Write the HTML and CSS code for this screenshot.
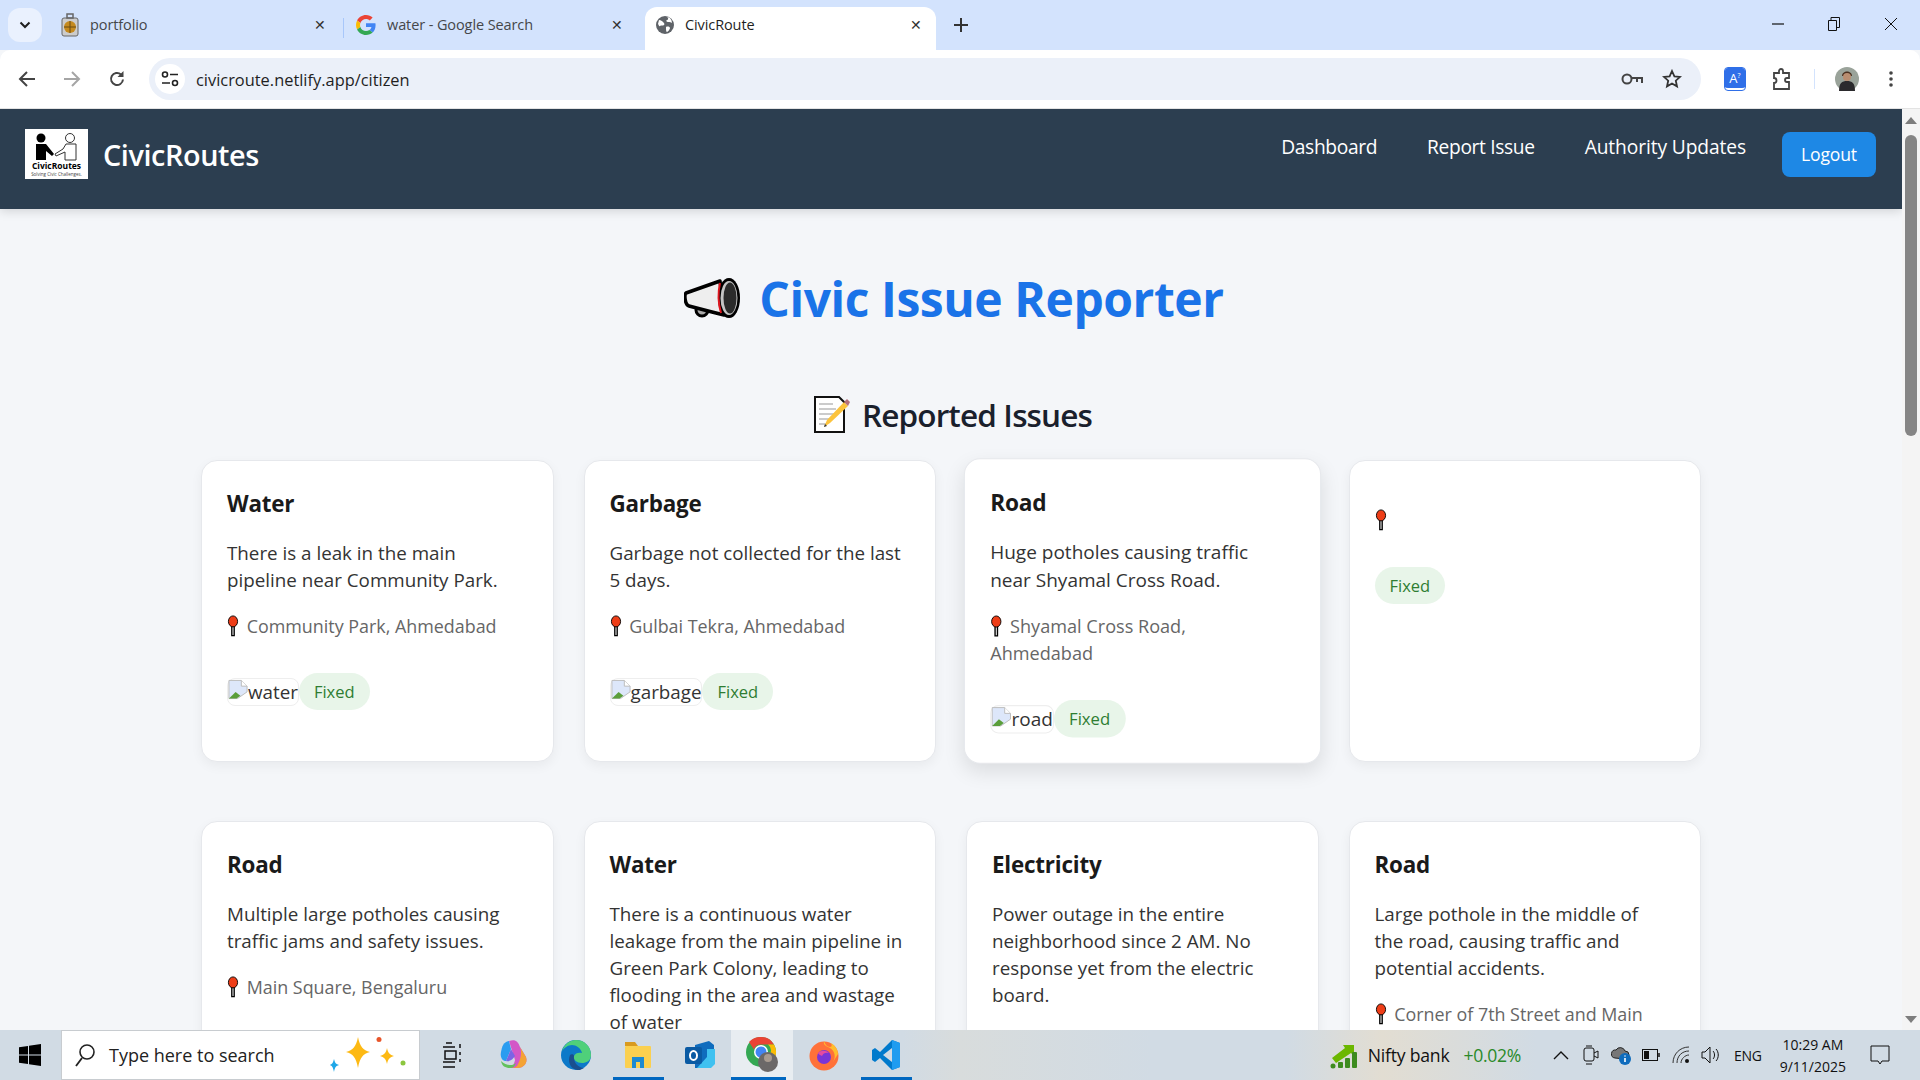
FILE: index.html
```html
<!DOCTYPE html>
<html lang="en">
<head>
<meta charset="UTF-8" />
<title>CivicRoute</title>
<link rel="stylesheet" href="styles.css">
</head>
<body>
  <div class="tabstrip">
    <div class="tab-menu">
      <svg width="12" height="8" viewBox="0 0 12 8"><path d="M1.5 1.5 6 6l4.5-4.5" fill="none" stroke="#1f1f1f" stroke-width="2"/></svg>
    </div>
    <div class="tab tab-first">
      <svg class="favicon" width="20" height="24" viewBox="0 0 20 24"><rect x="2" y="5" width="16" height="18" rx="2" fill="#ccc" stroke="#666"/><rect x="7" y="1" width="6" height="4" fill="none" stroke="#666" stroke-width="1.5"/><circle cx="10" cy="14" r="6" fill="#c58a1e"/><path d="M4 14h12M10 8v12" stroke="#6b4a10"/></svg>
      <span class="tab-title">portfolio</span>
      <span class="tab-close">✕</span>
    </div>
    <div class="tab-sep"></div>
    <div class="tab tab-second">
      <svg class="favicon" width="20" height="20" viewBox="0 0 48 48"><path fill="#ea4335" d="M24 9.5c3.5 0 6.700 1.300 9.100 3.500l6.800-6.800C35.800 2.400 30.300 0 24 0 14.600 0 6.600 5.400 2.600 13.200l7.900 6.100C12.400 13.600 17.700 9.500 24 9.500z"/><path fill="#4285f4" d="M47 24.500c0-1.600-.1-3.100-.4-4.500H24v9h13c-.6 3-2.200 5.500-4.800 7.200l7.700 6C44.300 38 47 31.800 47 24.500z"/><path fill="#fbbc05" d="M10.500 28.700c-.5-1.400-.8-3-.8-4.700s.3-3.200.8-4.700l-7.900-6.100C.9 16.500 0 20.100 0 24s.9 7.500 2.600 10.800z"/><path fill="#34a853" d="M24 48c6.500 0 11.900-2.100 15.900-5.800l-7.700-6c-2.200 1.400-4.900 2.300-8.200 2.300-6.300 0-11.600-4.100-13.500-9.800l-7.900 6.100C6.600 42.600 14.600 48 24 48z"/></svg>
      <span class="tab-title">water - Google Search</span>
      <span class="tab-close">✕</span>
    </div>
    <div class="tab tab-active">
      <svg class="favicon" width="20" height="20" viewBox="0 0 20 20"><circle cx="10" cy="10" r="9" fill="#5f6368"/><path d="M4 5c2 0 3 1 4 2s2 2 1 3-3 0-4 1-1-1-2-2zM12 2c2 1 1 3 0 3s-1 2 1 2 3 0 4 1c0-3-2-6-5-6zM11 12c2-1 4 0 4 1s-2 4-3 4-1-3-1-5z" fill="#fff"/></svg>
      <span class="tab-title tab-title-active">CivicRoute</span>
      <span class="tab-close">✕</span>
    </div>
    <svg class="tab-new" width="14" height="14" viewBox="0 0 14 14"><path d="M7 0v14M0 7h14" stroke="#333" stroke-width="2"/></svg>
    <div class="window-controls">
      <svg width="12" height="12" viewBox="0 0 12 12"><path d="M0 6h12" stroke="#111" stroke-width="1.2"/></svg>
      <svg width="12" height="14" viewBox="0 0 12 14"><path d="M.5 3.500h8v10h-8zM3 3.500V.5h8.500v10H8.500" fill="none" stroke="#111"/></svg>
      <svg width="14" height="14" viewBox="0 0 14 14"><path d="M1 1l12 12M13 1 1 13" stroke="#111"/></svg>
    </div>
  </div>

  <div class="toolbar">
    <svg class="tool-icon" width="18" height="16" viewBox="0 0 18 16"><path d="M9 1 2 8l7 7M2 8h15" fill="none" stroke="#444" stroke-width="2"/></svg>
    <svg class="tool-icon" width="18" height="16" viewBox="0 0 18 16"><path d="m9 1 7 7-7 7M16 8H1" fill="none" stroke="#a5a5a5" stroke-width="2"/></svg>
    <svg class="tool-icon" width="18" height="18" viewBox="0 0 18 18"><path d="M15 9.500A6 6 0 1 1 13 4.500" fill="none" stroke="#444" stroke-width="2"/><path d="M15.500 1v6h-6z" fill="#444"/></svg>
    <div class="omnibox">
      <div class="site-info">
        <svg width="18" height="18" viewBox="0 0 18 18"><circle cx="4" cy="4.500" r="2.500" fill="none" stroke="#222" stroke-width="1.600"/><path d="M9 4.500h8M1 13h8" stroke="#222" stroke-width="1.600"/><circle cx="14" cy="13" r="2.500" fill="none" stroke="#222" stroke-width="1.600"/></svg>
      </div>
      <span class="url">civicroute.netlify.app/citizen</span>
      <div class="omni-actions">
        <svg width="22" height="14" viewBox="0 0 22 14"><circle cx="6" cy="7" r="4.500" fill="none" stroke="#444" stroke-width="2"/><path d="M10 6h11v5M16 6v4" fill="none" stroke="#444" stroke-width="2"/></svg>
        <svg width="20" height="20" viewBox="0 0 20 20"><path d="m10 2 2.400 5.300 5.600.6-4.200 3.800 1.200 5.700-5-2.900-5 2.900 1.200-5.700L2 7.900l5.600-.6z" fill="none" stroke="#333" stroke-width="1.800"/></svg>
      </div>
    </div>
    <div class="tool-ext">
      <div class="ext-a">A<sup>?</sup></div>
      <svg class="ext-puzzle" width="20" height="22" viewBox="0 0 20 22"><path d="M2 5h5V3a2 2 0 0 1 4 0v2h6v5h-2a2 2 0 0 0 0 4h2v7H2v-6a2.500 2.500 0 0 0 0-5z" fill="none" stroke="#444" stroke-width="1.800"/></svg>
      <div class="tool-sep"></div>
      <svg class="avatar" width="24" height="24" viewBox="0 0 24 24"><circle cx="12" cy="12" r="12" fill="#9aa39a"/><path d="M7 9c0-6 10-6 10 0z" fill="#4a3020"/><circle cx="12" cy="10" r="4" fill="#b98d70"/><path d="M4 24c0-8 3-10 8-10s8 2 8 10z" fill="#2b2a2d"/></svg>
      <svg class="tool-more" width="4" height="16" viewBox="0 0 4 16"><circle cx="2" cy="2" r="1.800" fill="#444"/><circle cx="2" cy="8" r="1.800" fill="#444"/><circle cx="2" cy="14" r="1.800" fill="#444"/></svg>
    </div>
  </div>

  <div class="viewport">
    <div class="page">
      <nav class="navbar">
        <div class="brand">
          <svg class="logo" width="63" height="50" viewBox="0 0 63 50">
            <rect width="63" height="50" fill="#fff"/>
            <circle cx="16" cy="9" r="4.500" fill="#000"/>
            <path d="M11 15h10l8 10-2 2-6-5v9H11z" fill="#000"/>
            <circle cx="45" cy="9" r="4.500" fill="#fff" stroke="#333"/>
            <path d="M41 15h10v16H40v-8l-9 4-1-2 8-5z" fill="#fff" stroke="#333"/>
            <text x="31.500" y="40" class="logo-name">CivicRoutes</text>
            <text x="31.500" y="47" class="logo-tag">Solving Civic Challenges.</text>
          </svg>
          <span class="brand-name">CivicRoutes</span>
        </div>
        <div class="nav-links">
          <a>Dashboard</a>
          <a>Report Issue</a>
          <a>Authority Updates</a>
        </div>
        <button class="logout">Logout</button>
      </nav>

      <main class="content">
        <h1 class="page-title">
          <svg width="56" height="40" viewBox="0 0 56 40">
            <circle cx="18" cy="32" r="6" fill="#aaa" stroke="#000" stroke-width="3"/>
            <path d="M2 15 36 3l4 34-12-3L5 28C1 27 0 17 2 15z" fill="#eee" stroke="#000" stroke-width="3.500" stroke-linejoin="round"/>
            <ellipse cx="45" cy="20" rx="11" ry="20" fill="#000"/>
            <ellipse cx="45" cy="20" rx="8.500" ry="17" fill="#c4c4c4"/>
            <ellipse cx="46" cy="20" rx="6.500" ry="15.500" fill="#2b2b2b"/>
            <path d="M36 5c-2 9-2 20 1 30" fill="none" stroke="#e0161e" stroke-width="2"/>
          </svg>
          <span>Civic Issue Reporter</span>
        </h1>
        <h2 class="section-title">
          <svg width="36" height="37" viewBox="0 0 36 37">
            <path d="M1 1h24l5 5v30H1z" fill="#fff" stroke="#111" stroke-width="2"/>
            <path d="M5 8h14M5 13h17M5 18h17M5 23h12M5 28h8" stroke="#bbb" stroke-width="1.500"/>
            <path d="m10 31 3-7L30 6l4 4-18 17z" fill="#fcc33c"/>
            <path d="m30 6 3-3 3 3-2 4z" fill="#b5707a"/>
            <path d="m10 31 1-3 2 2z" fill="#333"/>
          </svg>
          <span>Reported Issues</span>
        </h2>

        <div class="issue-grid">
          <article class="card">
            <h3>Water</h3>
            <p class="desc">There is a leak in the main<br>pipeline near Community Park.</p>
            <p class="loc"><svg class="pin" viewBox="0 0 12 24"><path d="M4.700 12h2.600v10.500H4.700z" fill="#fff" stroke="#000" stroke-width="1.500"/><ellipse cx="6" cy="7" rx="5" ry="6" fill="#ee3d17" stroke="#000"/></svg> Community Park, Ahmedabad</p>
            <div class="card-foot">
              <span class="img-alt"><svg class="broken" viewBox="0 0 21 21"><path d="M1 1h13l6 6v6L10 20H1z" fill="#dde7fa" stroke="#bbb"/><path d="M14 1v6h6" fill="#fff" stroke="#bbb"/><path d="M1 20l7-7 5 4-4 3z" fill="#5a9e3a"/></svg>water</span>
              <span class="status">Fixed</span>
            </div>
          </article>
          <article class="card">
            <h3>Garbage</h3>
            <p class="desc">Garbage not collected for the last<br>5 days.</p>
            <p class="loc"><svg class="pin" viewBox="0 0 12 24"><path d="M4.700 12h2.600v10.500H4.700z" fill="#fff" stroke="#000" stroke-width="1.500"/><ellipse cx="6" cy="7" rx="5" ry="6" fill="#ee3d17" stroke="#000"/></svg> Gulbai Tekra, Ahmedabad</p>
            <div class="card-foot">
              <span class="img-alt"><svg class="broken" viewBox="0 0 21 21"><path d="M1 1h13l6 6v6L10 20H1z" fill="#dde7fa" stroke="#bbb"/><path d="M14 1v6h6" fill="#fff" stroke="#bbb"/><path d="M1 20l7-7 5 4-4 3z" fill="#5a9e3a"/></svg>garbage</span>
              <span class="status">Fixed</span>
            </div>
          </article>
          <article class="card card-hover">
            <h3>Road</h3>
            <p class="desc">Huge potholes causing traffic<br>near Shyamal Cross Road.</p>
            <p class="loc"><svg class="pin" viewBox="0 0 12 24"><path d="M4.700 12h2.600v10.500H4.700z" fill="#fff" stroke="#000" stroke-width="1.500"/><ellipse cx="6" cy="7" rx="5" ry="6" fill="#ee3d17" stroke="#000"/></svg> Shyamal Cross Road,<br>Ahmedabad</p>
            <div class="card-foot">
              <span class="img-alt"><svg class="broken" viewBox="0 0 21 21"><path d="M1 1h13l6 6v6L10 20H1z" fill="#dde7fa" stroke="#bbb"/><path d="M14 1v6h6" fill="#fff" stroke="#bbb"/><path d="M1 20l7-7 5 4-4 3z" fill="#5a9e3a"/></svg>road</span>
              <span class="status">Fixed</span>
            </div>
          </article>
          <article class="card">
            <h3></h3>
            <p class="loc"><svg class="pin" viewBox="0 0 12 24"><path d="M4.700 12h2.600v10.500H4.700z" fill="#fff" stroke="#000" stroke-width="1.500"/><ellipse cx="6" cy="7" rx="5" ry="6" fill="#ee3d17" stroke="#000"/></svg></p>
            <div class="card-foot">
              <span class="status">Fixed</span>
            </div>
          </article>

          <article class="card">
            <h3>Road</h3>
            <p class="desc">Multiple large potholes causing<br>traffic jams and safety issues.</p>
            <p class="loc"><svg class="pin" viewBox="0 0 12 24"><path d="M4.700 12h2.600v10.500H4.700z" fill="#fff" stroke="#000" stroke-width="1.500"/><ellipse cx="6" cy="7" rx="5" ry="6" fill="#ee3d17" stroke="#000"/></svg> Main Square, Bengaluru</p>
          </article>
          <article class="card">
            <h3>Water</h3>
            <p class="desc">There is a continuous water<br>leakage from the main pipeline in<br>Green Park Colony, leading to<br>flooding in the area and wastage<br>of water</p>
          </article>
          <article class="card">
            <h3>Electricity</h3>
            <p class="desc">Power outage in the entire<br>neighborhood since 2 AM. No<br>response yet from the electric<br>board.</p>
          </article>
          <article class="card">
            <h3>Road</h3>
            <p class="desc">Large pothole in the middle of<br>the road, causing traffic and<br>potential accidents.</p>
            <p class="loc"><svg class="pin" viewBox="0 0 12 24"><path d="M4.700 12h2.600v10.500H4.700z" fill="#fff" stroke="#000" stroke-width="1.500"/><ellipse cx="6" cy="7" rx="5" ry="6" fill="#ee3d17" stroke="#000"/></svg> Corner of 7th Street and Main</p>
          </article>
        </div>
      </main>
    </div>
    <div class="scrollbar">
      <div class="arrow-up"></div>
      <div class="thumb"></div>
      <div class="arrow-down"></div>
    </div>
  </div>

  <footer class="taskbar">
    <svg class="start" width="22" height="22" viewBox="0 0 22 22"><path d="M0 3.200 9 2v8.500H0zM10 1.800 22 0v10.500H10zM0 11.500h9V20L0 18.800zM10 11.500h12V22l-12-1.800z" fill="#000"/></svg>
    <div class="search">
      <svg width="22" height="26" viewBox="0 0 22 26"><circle cx="13" cy="10" r="7" fill="none" stroke="#222" stroke-width="1.600"/><path d="M8 16 2 24" stroke="#222" stroke-width="1.800"/></svg>
      <span>Type here to search</span>
      <svg class="sparkles" width="76" height="36" viewBox="0 0 76 36">
        <path d="M28 0c2 10 5 13 12 15-7 2-10 5-12 16-2-11-5-14-12-16 7-2 10-5 12-15z" fill="#fdb913"/>
        <path d="M57 11c1 5 3 7 7 8-4 1-6 3-7 8-1-5-3-7-7-8 4-1 6-3 7-8z" fill="#fdb913"/>
        <path d="M4 22c1 4 2 5 5 6-3 1-4 2-5 7-1-5-2-6-4-7 2-1 3-2 4-6z" fill="#1ea7e8"/>
        <circle cx="49" cy="2.500" r="2.500" fill="#e8552a"/><circle cx="73" cy="26" r="2.500" fill="#8cc63f"/>
      </svg>
    </div>
    <div class="task-icons">
      <div class="task-icon">
        <svg width="20" height="26" viewBox="0 0 20 26"><path d="M1 5h12M1 20h12M1 25h12M4 1h6M3 9h11v8H3zM18 2v4M18 10v3M18 17v3" fill="none" stroke="#111" stroke-width="1.500"/></svg>
      </div>
      <div class="task-icon">
        <svg width="32" height="32" viewBox="0 0 32 32"><path d="M11 2c6-2 9 0 11 6l6 10c2 6-2 11-9 11H10c4 0 6-3 7-8L11 2z" fill="#d357c7"/><path d="M11 2C5 3 4 8 3 13c-1 5 1 9 5 9l5-12z" fill="#2b9cf0"/><path d="M22 8c2 4 1 12-2 17-1 3-4 4-8 4h7c7 0 11-5 9-11z" fill="#f4a334"/><path d="M8 22c4 1 7-2 9-5l-4-7-5 12z" fill="#7c64e5"/><path d="M3 22c1 5 4 7 9 7 3 0 5-2 6-5-3 3-10 3-15-2z" fill="#63c15c"/></svg>
      </div>
      <div class="task-icon">
        <svg width="30" height="30" viewBox="0 0 30 30"><circle cx="15" cy="15" r="15" fill="#0c79c9"/><path d="M15 0c8 0 15 6 15 15 0 6-5 8-9 8-5 0-9-3-8-7 1-3 5-4 8-3-1-5-6-8-10-8-4 0-8 3-10 6C3 5 8 0 15 0z" fill="#4fd07a"/><path d="M13 16c-1 6 4 12 10 12l-4 2C10 31 6 22 9 15c1-1 4-1 4 1z" fill="#1a4f8f"/></svg>
      </div>
      <div class="task-icon task-open">
        <svg width="28" height="28" viewBox="0 0 28 28"><path d="M1 1h10l3 4H1z" fill="#d99a1e"/><rect x="1" y="5" width="26" height="22" rx="1" fill="#fbd04f"/><path d="M8 27V16h12v11h-4v-6h-4v6z" fill="#1d8ad1"/></svg>
      </div>
      <div class="task-icon">
        <svg width="30" height="30" viewBox="0 0 30 30"><path d="M10 5 24 1l5 4v17l-5 6H10z" fill="#0f6cbd"/><path d="M22 9h8v15l-4 4H12l10-11z" fill="#3fc1f0"/><rect y="7" width="17" height="17" rx="2" fill="#0a5aa3"/><ellipse cx="8.500" cy="15.500" rx="3.500" ry="4.500" fill="none" stroke="#fff" stroke-width="2"/></svg>
      </div>
      <div class="task-icon task-active">
        <svg width="32" height="36" viewBox="0 0 32 36"><circle cx="15" cy="15" r="15" fill="#34a853"/><path d="M15 0a15 15 0 0 1 13 7.500H15a7 7 0 0 0-7 5L3 5a15 15 0 0 1 12-5z" fill="#ea4335"/><path d="M28 7.500A15 15 0 0 1 17 30l6-11a8 8 0 0 0-1-11.500z" fill="#fbbc05"/><circle cx="15" cy="15" r="7" fill="#fff"/><circle cx="15" cy="15" r="5.500" fill="#4285f4"/><circle cx="22" cy="25" r="10" fill="#6b6868"/><circle cx="22" cy="21" r="4" fill="#a89b90"/></svg>
      </div>
      <div class="task-icon">
        <svg width="30" height="32" viewBox="0 0 30 32"><circle cx="15" cy="17" r="14.500" fill="#ff7139"/><path d="M15 2c-1 4 2 5 6 7 5 3 6 9 3 14L29 15c0-4-3-9-7-11 1 2 1 4-1 4-3 0-5-3-6-6z" fill="#ffbd2e"/><circle cx="15" cy="18" r="7" fill="#7a35d6"/><path d="M9 14c3-3 8-3 11 0-3-1-6 0-7 3-1-1-3-1-4-3z" fill="#e64ba0"/></svg>
      </div>
      <div class="task-icon task-open">
        <svg width="28" height="30" viewBox="0 0 28 30"><path d="M20 0 8 12 3 8 0 10v10l3 2 5-4 12 12 8-3V3z" fill="#007acc"/><path d="M20 8v14l-9-7z" fill="#d1dbe4"/><path d="M20 0l8 3v24l-8 3z" fill="#1f9cf0"/></svg>
      </div>
    </div>
    <div class="tray">
      <svg width="28" height="28" viewBox="0 0 28 28"><path d="M2 17 15 7l-2-3h11v11l-3-3L6 22z" fill="#6bb700"/><circle cx="3" cy="25" r="2.500" fill="#3d8b1f"/><rect x="8" y="21" width="5" height="6" rx="1" fill="#3d8b1f"/><rect x="15" y="17" width="5" height="10" rx="1" fill="#3d8b1f"/><rect x="22" y="11" width="5" height="16" rx="1" fill="#3d8b1f"/></svg>
      <span class="nifty">Nifty bank</span>
      <span class="nifty-change">+0.02%</span>
      <div class="tray-icons">
        <span class="tray-icon"><svg width="16" height="10" viewBox="0 0 16 10"><path d="m1 9 7-7 7 7" fill="none" stroke="#111" stroke-width="1.400"/></svg></span>
        <span class="tray-icon"><svg width="16" height="20" viewBox="0 0 16 20"><rect x="1" y="3" width="10" height="13" rx="2" fill="none" stroke="#111"/><path d="m11 8 4-2v7l-4-2M3 1h6M3 19h6" fill="none" stroke="#111"/></svg></span>
        <span class="tray-icon"><svg width="20" height="20" viewBox="0 0 20 20"><path d="M4 13a4 4 0 0 1 1-8 5 5 0 0 1 9 1 4 4 0 0 1 0 8z" fill="#777" stroke="#222"/><circle cx="14" cy="14" r="6" fill="#0f6cbd"/><path d="M14 13v4M14 10.500v1" stroke="#fff" stroke-width="1.600"/></svg></span>
        <span class="tray-icon"><svg width="18" height="12" viewBox="0 0 18 12"><rect x=".5" y=".5" width="15" height="11" fill="none" stroke="#111"/><rect x="2" y="2" width="5" height="8" fill="#111"/><path d="M17 4v4" stroke="#111" stroke-width="1.500"/></svg></span>
        <span class="tray-icon"><svg width="18" height="18" viewBox="0 0 18 18"><path d="M1 17C1 8 8 1 17 1M5 17c0-7 5-12 12-12M9 17c0-4 4-8 8-8" fill="none" stroke="#333"/><circle cx="15" cy="15" r="2" fill="#111"/></svg></span>
        <span class="tray-icon"><svg width="20" height="18" viewBox="0 0 20 18"><path d="M1 6h3l5-5v16l-5-5H1zM12 5c2 2 2 6 0 8M15 3c3 3 3 9 0 12" fill="none" stroke="#111"/></svg></span>
      </div>
      <span class="lang">ENG</span>
      <div class="clock"><span>10:29 AM</span><span>9/11/2025</span></div>
      <svg class="notify" width="20" height="20" viewBox="0 0 20 20"><path d="M1 1h18v15h-7l-2 3-2-3H1z" fill="none" stroke="#111"/></svg>
    </div>
  </footer>
</body>
</html>
```
FILE: styles.css
```css
* {
  box-sizing: border-box;
}
html, body {
  height: 100%;
}
body {
  margin: 0;
  display: flex;
  flex-direction: column;
  overflow: hidden;
  font-family: "Open Sans", "Noto Sans", sans-serif;
  background: #f4f6f9;
}

/* browser tabs */
.tabstrip {
  height: 50px;
  flex: none;
  display: flex;
  align-items: flex-end;
  background: #d3e3fd;
  padding-left: 8px;
  font-size: 14px;
  color: #45474a;
}
.tab-menu {
  width: 34px;
  height: 34px;
  margin-bottom: 8px;
  background: #eaf1fe;
  border-radius: 12px;
  display: flex;
  align-items: center;
  justify-content: center;
}
.tab {
  height: 43px;
  display: flex;
  align-items: center;
  padding-bottom: 8px;
}
.tab-first {
  width: 301px;
  padding-left: 18px;
  padding-right: 17px;
}
.tab-second {
  width: 301px;
  padding-left: 12px;
  padding-right: 22px;
}
.tab-active {
  width: 291px;
  padding-left: 10px;
  padding-right: 14px;
  background: #fff;
  border-radius: 12px 12px 0 0;
}
.tab-second .favicon {
  margin-right: 11px;
}
.favicon {
  flex: none;
  margin-right: 10px;
}
.tab-title {
  flex: 1;
  font-size: 14.500px;
  letter-spacing: -0.1px;
}
.tab-title-active {
  color: #1f1f1f;
}
.tab-close {
  font-size: 14px;
  color: #333;
}
.tab-sep {
  width: 1px;
  height: 20px;
  margin-bottom: 12px;
  background: #a8c7fa;
}
.tab-new {
  margin: 0 0 18px 18px;
}
.window-controls {
  margin-left: auto;
  display: flex;
  align-items: center;
  gap: 44px;
  padding-right: 22px;
  margin-bottom: 19px;
}

/* address bar */
.toolbar {
  height: 59px;
  flex: none;
  display: flex;
  align-items: center;
  background: #fff;
  border-bottom: 1px solid #e3e3e3;
  border-radius: 10px 10px 0 0;
  padding-left: 18px;
}
.tool-icon {
  margin-right: 27px;
}
.tool-icon:nth-child(3) {
  margin-right: 23px;
}
.omnibox {
  width: 1552px;
  height: 42px;
  display: flex;
  align-items: center;
  background: #ebf0f9;
  border-radius: 21px;
  padding: 0 19px 0 6px;
}
.site-info {
  width: 30px;
  height: 30px;
  border-radius: 50%;
  background: #fff;
  display: flex;
  align-items: center;
  justify-content: center;
  margin-right: 11px;
}
.url {
  font-size: 16.400px;
  color: #1f1f1f;
}
.omni-actions {
  margin-left: auto;
  display: flex;
  align-items: center;
  gap: 19px;
}
.tool-ext {
  display: flex;
  align-items: center;
  gap: 25px;
  margin-left: 24px;
}
.ext-a {
  width: 20px;
  height: 22px;
  background: #2f6fe8;
  border-radius: 3px;
  color: #fff;
  font-size: 13px;
  text-align: center;
  line-height: 20px;
  border-bottom: 2px solid #fff;
  outline: 1px solid #2f6fe8;
}
.ext-a sup {
  font-size: 7px;
  line-height: 0;
}
.ext-puzzle {
  margin-left: 2px;
}
.tool-sep {
  width: 1px;
  height: 20px;
  margin: 0 -3px;
  background: #d3e3fd;
}
.avatar {
  margin-left: -2px;
}
.tool-more {
  margin-left: 5px;
}

/* page area */
.viewport {
  flex: 1;
  min-height: 0;
  display: flex;
}
.page {
  flex: 1;
  min-width: 0;
  overflow: hidden;
}
.scrollbar {
  width: 18px;
  flex: none;
  background: #f4f4f4;
  position: relative;
  display: flex;
  flex-direction: column;
  align-items: center;
}
.arrow-up {
  margin-top: 8px;
  border: 6px solid transparent;
  border-top: 0;
  border-bottom: 7px solid #7d7d7d;
}
.thumb {
  width: 12px;
  height: 301px;
  margin-top: 11px;
  background: #858585;
  border-radius: 6px;
}
.arrow-down {
  margin-top: auto;
  margin-bottom: 7px;
  border: 6px solid transparent;
  border-bottom: 0;
  border-top: 7px solid #7d7d7d;
}

.navbar {
  height: 100px;
  display: flex;
  align-items: center;
  padding: 0 26px 10px 25px;
  background: #2c3e50;
  box-shadow: 0 2px 10px rgba(0, 0, 0, 0.15);
  position: relative;
}
.brand {
  display: flex;
  align-items: center;
  gap: 15px;
}
.logo-name {
  font: 700 8.500px "Open Sans", sans-serif;
  text-anchor: middle;
  fill: #000;
}
.logo-tag {
  font: 4.500px "Open Sans", sans-serif;
  text-anchor: middle;
  fill: #444;
}
.brand-name {
  font-size: 28.800px;
  font-weight: 600;
  color: #fff;
  letter-spacing: -0.4px;
}
.nav-links {
  margin-left: auto;
  display: flex;
  gap: 50px;
  padding-bottom: 15px;
  font-size: 19.200px;
  letter-spacing: -0.35px;
  color: #fff;
}
.nav-links a:last-child {
  letter-spacing: -0.1px;
}
.logout {
  width: 94px;
  height: 45px;
  margin-left: 36px;
  border: none;
  border-radius: 8px;
  background: #1e88e5;
  color: #fff;
  font: 17.600px "Open Sans", sans-serif;
  letter-spacing: -0.2px;
}

.content {
  padding: 57px 201px 0;
}
.page-title {
  margin: 0;
  height: 64px;
  padding-left: 6px;
  display: flex;
  align-items: center;
  justify-content: center;
  gap: 19px;
  font-size: 48px;
  font-weight: 700;
  color: #1a73e8;
  letter-spacing: -0.45px;
}
.section-title {
  margin: 63px 0 24px;
  height: 43px;
  padding-left: 4px;
  display: flex;
  align-items: center;
  justify-content: center;
  gap: 12px;
  font-size: 31.500px;
  font-weight: 600;
  color: #1a202c;
  letter-spacing: -0.85px;
}

.issue-grid {
  display: grid;
  grid-template-columns: repeat(4, 1fr);
  column-gap: 30px;
  row-gap: 59px;
}
.card {
  background: #fff;
  border: 1px solid #e6e8ec;
  border-radius: 16px;
  padding: 24px 24px 25px 25px;
  box-shadow: 0 4px 12px rgba(0, 0, 0, 0.05);
}
.card-hover {
  transform: scale(1.012);
  box-shadow: 0 8px 20px rgba(0, 0, 0, 0.1);
}
.card h3 {
  margin: 0 0 19px;
  height: 36px;
  font-size: 22.400px;
  line-height: 38px;
  font-weight: 700;
  color: #1a1a1a;
  letter-spacing: -0.2px;
}
.card h3:empty {
  height: 0;
  margin-bottom: 22px;
}
.desc {
  margin: 0 0 19px;
  font-size: 18.800px;
  line-height: 27px;
  color: #333;
}
.loc {
  margin: 0 0 34px;
  font-size: 17.900px;
  line-height: 26px;
  color: #666;
  min-height: 26px;
}
.pin {
  width: 12px;
  height: 22px;
  margin-right: 3px;
  vertical-align: -4px;
}
.card-foot {
  display: flex;
  align-items: center;
}
.img-alt {
  height: 28px;
  display: inline-flex;
  align-items: center;
  border: 1px solid #eee;
  border-radius: 8px;
  font-size: 18.800px;
  color: #333;
}
.broken {
  width: 20px;
  height: 21px;
  margin-top: -5px;
  flex: none;
}
.status {
  height: 37px;
  padding: 0 15px;
  display: inline-flex;
  align-items: center;
  border-radius: 18.500px;
  background: #e8f5e9;
  color: #2e7d32;
  font-size: 16.500px;
  font-weight: 500;
}

/* windows taskbar */
.taskbar {
  height: 50px;
  flex: none;
  display: flex;
  align-items: center;
  background: linear-gradient(90deg, #d1dbe4 0, #d1dbe4 47%, #d8dcdc 50%, #d1dbe4 60%, #d1dbe4 67%, #e2ddd2 72%, #d1dbe4 80%);
  padding-left: 19px;
  color: #111;
}
.start {
  flex: none;
}
.search {
  width: 359px;
  height: 50px;
  margin-left: 20px;
  display: flex;
  align-items: center;
  background: #fff;
  border: 1px solid #c8ccd0;
  padding: 0 13px 0 12px;
  font-size: 18px;
  color: #222;
}
.search span {
  margin-left: 13px;
}
.sparkles {
  margin-left: auto;
}
.task-icons {
  display: flex;
  align-items: center;
  margin-left: 1px;
  height: 50px;
}
.task-icon {
  width: 62px;
  height: 50px;
  display: flex;
  align-items: center;
  justify-content: center;
}
.task-icon.task-open {
  background: linear-gradient(#0067c0, #0067c0) center bottom / 51px 3px no-repeat;
}
.task-icon.task-active {
  background: linear-gradient(#0067c0, #0067c0) left bottom / 55px 3px no-repeat, #e8edf1;
}
.tray {
  margin-left: auto;
  display: flex;
  align-items: center;
  padding-right: 30px;
}
.nifty {
  margin-left: 10px;
  font-size: 17.600px;
  letter-spacing: -0.2px;
}
.nifty-change {
  margin-left: 14px;
  font-size: 17.600px;
  letter-spacing: -0.3px;
  color: #2a8a2a;
}
.tray-icons {
  display: flex;
  align-items: center;
  margin-left: 25px;
}
.tray-icon {
  width: 30px;
  display: flex;
  justify-content: center;
}
.lang {
  margin-left: 8px;
  font-size: 14px;
  letter-spacing: -0.3px;
}
.clock {
  margin-left: 18px;
  display: flex;
  flex-direction: column;
  align-items: center;
  gap: 3px;
  font-size: 14px;
}
.notify {
  margin-left: 24px;
}
```
